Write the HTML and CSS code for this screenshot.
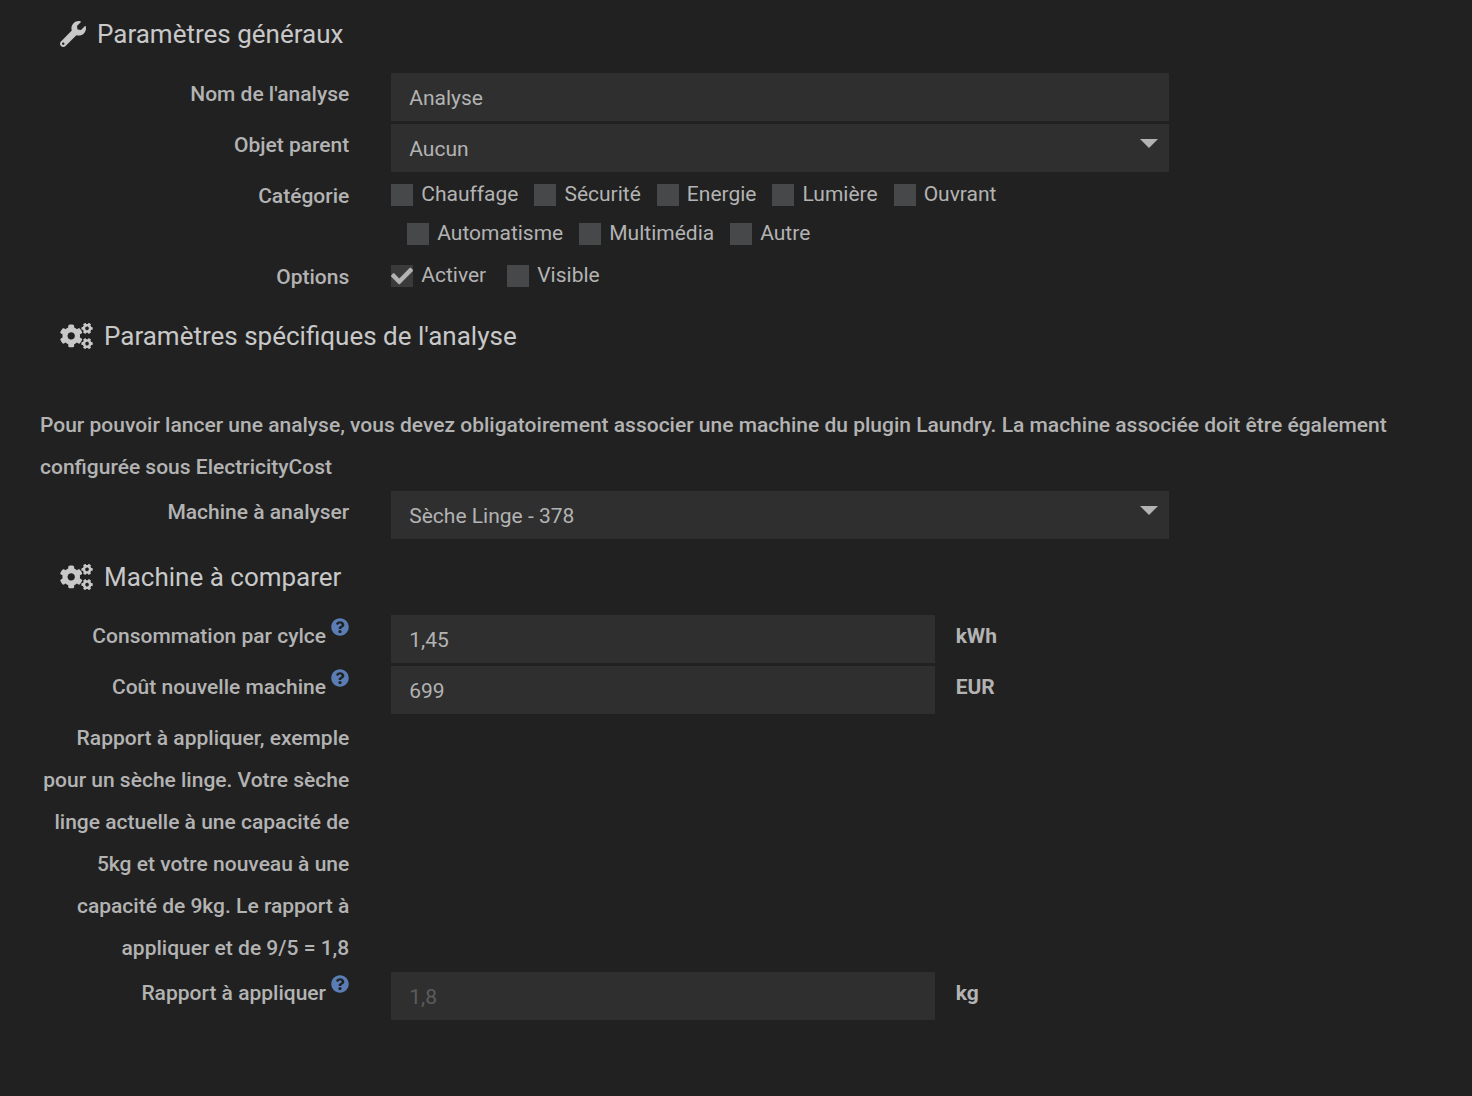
FILE: index.html
```html
<!DOCTYPE html>
<html lang="fr">
<head>
<meta charset="utf-8">
<title>Analyse</title>
<meta name="viewport" content="width=device-width, initial-scale=1">
<link rel="stylesheet" href="styles.css">
</head>
<body>
<svg class="sprite" aria-hidden="true">
  <symbol id="cogs" viewBox="0 0 640 512">
    <path id="small-cog" fill-rule="evenodd" d="M512.1 191l-8.2 14.3c-3 5.3-9.4 7.5-15.1 5.4-11.8-4.4-22.6-10.7-32.1-18.6-4.6-3.8-5.8-10.5-2.8-15.7l8.2-14.3c-6.9-8-12.3-17.3-15.9-27.4h-16.5c-6 0-11.2-4.3-12.2-10.3-2-12-2.1-24.6 0-37.1 1-6 6.2-10.4 12.2-10.4h16.5c3.6-10.1 9-19.4 15.9-27.4l-8.2-14.3c-3-5.2-1.9-11.9 2.8-15.7 9.5-7.9 20.4-14.2 32.1-18.6 5.7-2.1 12.1.1 15.1 5.4l8.2 14.3c10.5-1.9 21.2-1.9 31.7 0L552 6.3c3-5.3 9.4-7.5 15.1-5.4 11.8 4.4 22.6 10.7 32.1 18.6 4.6 3.8 5.8 10.5 2.8 15.7l-8.2 14.3c6.9 8 12.3 17.3 15.9 27.4h16.5c6 0 11.2 4.3 12.2 10.3 2 12 2.1 24.6 0 37.1-1 6-6.2 10.4-12.2 10.4h-16.5c-3.6 10.1-9 19.4-15.9 27.4l8.2 14.3c3 5.2 1.9 11.9-2.8 15.7-9.5 7.9-20.4 14.2-32.1 18.6-5.7 2.1-12.1-.1-15.1-5.4l-8.2-14.3c-10.4 1.9-21.2 1.9-31.7 0zm-10.5-58.8c38.5 29.6 82.4-14.3 52.8-52.8-38.5-29.7-82.4 14.3-52.8 52.8z"/>
    <use href="#small-cog" y="299"/>
    <path fill-rule="evenodd" d="M386.3 286.1l33.7 16.8c10.1 5.8 14.5 18.1 10.5 29.1-8.9 24.2-26.4 46.4-42.6 65.8-7.4 8.9-20.2 11.1-30.3 5.3l-29.1-16.8c-16 13.7-34.6 24.6-54.9 31.7v33.6c0 11.6-8.3 21.6-19.7 23.6-24.6 4.2-50.4 4.4-75.9 0-11.5-2-20-11.9-20-23.6V418c-20.3-7.2-38.9-18-54.9-31.7L74 403c-10 5.8-22.9 3.6-30.3-5.3-16.2-19.4-33.3-41.6-42.2-65.7-4-10.9.4-23.2 10.5-29.1l33.3-16.8c-3.9-20.9-3.9-42.4 0-63.4L12 205.8c-10.1-5.8-14.6-18.1-10.5-29 8.9-24.2 26-46.4 42.2-65.8 7.4-8.9 20.2-11.1 30.3-5.3l29.1 16.8c16-13.7 34.6-24.6 54.9-31.7V57.1c0-11.5 8.2-21.5 19.6-23.5 24.6-4.2 50.5-4.4 76-.1 11.5 2 20 11.9 20 23.6v33.6c20.3 7.2 38.9 18 54.9 31.7l29.1-16.8c10-5.8 22.9-3.6 30.3 5.3 16.2 19.4 33.2 41.6 42.1 65.8 4 10.9.1 23.2-10 29.1l-33.7 16.8c3.9 21 3.9 42.5 0 63.5zm-117.6 21.1c59.2-77-28.7-164.9-105.7-105.7-59.2 77 28.7 164.9 105.7 105.7z"/>
  </symbol>
  <symbol id="wrench" viewBox="0 0 512 512">
    <path d="M507.73 109.1c-2.24-9.03-13.54-12.09-20.12-5.51l-74.36 74.36-67.88-11.31-11.31-67.88 74.36-74.36c6.62-6.62 3.43-17.9-5.66-20.16-47.38-11.74-99.55.91-136.58 37.93-39.64 39.64-50.55 97.1-34.05 147.2L18.74 402.76c-24.99 24.99-24.99 65.51 0 90.5 24.99 24.99 65.51 24.99 90.5 0l213.21-213.21c50.12 16.71 107.47 5.68 147.37-34.22 37.07-37.07 49.7-89.32 37.91-136.73zM64 472c-13.25 0-24-10.75-24-24 0-13.26 10.75-24 24-24s24 10.74 24 24c0 13.25-10.75 24-24 24z"/>
  </symbol>
  <symbol id="question" viewBox="0 0 512 512">
    <path d="M504 256c0 136.997-111.043 248-248 248S8 392.997 8 256C8 119.083 119.043 8 256 8s248 111.083 248 248zM262.655 90c-54.497 0-89.255 22.957-116.549 63.758-3.536 5.286-2.353 12.415 2.715 16.258l34.699 26.31c5.205 3.947 12.621 3.008 16.665-2.122 17.864-22.658 30.113-35.797 57.303-35.797 20.429 0 45.698 13.148 45.698 32.958 0 14.976-12.363 22.667-32.534 33.976C247.128 238.528 216 254.941 216 296v4c0 6.627 5.373 12 12 12h56c6.627 0 12-5.373 12-12v-1.333c0-28.462 83.186-29.647 83.186-106.667 0-58.002-60.165-102-116.531-102zM256 338c-25.365 0-46 20.635-46 46 0 25.364 20.635 46 46 46s46-20.636 46-46c0-25.364-20.635-46-46-46z"/>
  </symbol>
</svg>
<form class="form">
  <section class="section">
    <h2 class="legend"><svg class="legend-icon"><use href="#wrench"/></svg>Paramètres généraux</h2>
    <div class="row">
      <label class="label" for="name">Nom de l'analyse</label>
      <div class="field"><input class="control" id="name" type="text" value="Analyse"></div>
    </div>
    <div class="row">
      <label class="label" for="parent">Objet parent</label>
      <div class="field"><select class="control" id="parent"><option>Aucun</option></select><svg class="arrow" viewBox="0 0 18 9"><path d="M0 0h18L9 9z"/></svg></div>
    </div>
    <div class="row">
      <span class="label" id="category">Catégorie</span>
      <div class="field checks" role="group" aria-labelledby="category">
        <label class="check"><input type="checkbox">Chauffage</label>
        <label class="check"><input type="checkbox">Sécurité</label>
        <label class="check"><input type="checkbox">Energie</label>
        <label class="check"><input type="checkbox">Lumière</label>
        <label class="check"><input type="checkbox">Ouvrant</label>
        <label class="check"><input type="checkbox">Automatisme</label>
        <label class="check"><input type="checkbox">Multimédia</label>
        <label class="check"><input type="checkbox">Autre</label>
      </div>
    </div>
    <div class="row">
      <span class="label" id="options">Options</span>
      <div class="field checks checks-wide" role="group" aria-labelledby="options">
        <label class="check"><input type="checkbox" checked><svg class="tick" viewBox="0 0 512 512"><path d="M173.898 439.404l-166.4-166.4c-9.997-9.997-9.997-26.206 0-36.204l36.203-36.204c9.997-9.998 26.207-9.998 36.204 0L192 312.69 432.095 72.596c9.997-9.997 26.207-9.997 36.204 0l36.203 36.204c9.997 9.997 9.997 26.206 0 36.204l-294.4 294.401c-9.998 9.997-26.207 9.997-36.204-.001z"/></svg>Activer</label>
        <label class="check"><input type="checkbox">Visible</label>
      </div>
    </div>
  </section>
  <section class="section">
    <h2 class="legend"><svg class="legend-icon legend-icon-wide"><use href="#cogs"/></svg>Paramètres spécifiques de l'analyse</h2>
    <p class="notice">Pour pouvoir lancer une analyse, vous devez obligatoirement associer une machine du plugin Laundry. La machine associée doit être également configurée sous ElectricityCost</p>
    <div class="row">
      <label class="label" for="machine">Machine à analyser</label>
      <div class="field"><select class="control" id="machine"><option>Sèche Linge - 378</option></select><svg class="arrow" viewBox="0 0 18 9"><path d="M0 0h18L9 9z"/></svg></div>
    </div>
  </section>
  <section class="section">
    <h2 class="legend"><svg class="legend-icon legend-icon-wide"><use href="#cogs"/></svg>Machine à comparer</h2>
    <div class="row row-unit">
      <label class="label" for="usage">Consommation par cylce <svg class="help"><use href="#question"/></svg></label>
      <div class="field"><input class="control" id="usage" type="text" value="1,45"></div>
      <span class="unit">kWh</span>
    </div>
    <div class="row row-unit">
      <label class="label" for="cost">Coût nouvelle machine <svg class="help"><use href="#question"/></svg></label>
      <div class="field"><input class="control" id="cost" type="text" value="699"></div>
      <span class="unit">EUR</span>
    </div>
    <div class="row">
      <p class="label">Rapport à appliquer, exemple pour un sèche linge. Votre sèche linge actuelle à une capacité de 5kg et votre nouveau à une capacité de 9kg. Le rapport à appliquer et de 9/5 = 1,8</p>
    </div>
    <div class="row row-unit">
      <label class="label" for="ratio">Rapport à appliquer <svg class="help"><use href="#question"/></svg></label>
      <div class="field"><input class="control" id="ratio" type="text" placeholder="1,8"></div>
      <span class="unit">kg</span>
    </div>
  </section>
</form>
</body>
</html>
```
FILE: styles.css
```css
* {
  box-sizing: border-box;
}

body {
  margin: 0;
  background: #212121;
  color: #b3b3b3;
  font: 400 21px/42px Roboto, sans-serif;
}

.sprite {
  display: block;
  width: 0;
  height: 0;
}

.form {
  margin: 0 48px 0 19px;
  padding-bottom: 75px;
}

.section {
  display: flex;
  flex-direction: column;
  gap: 3px;
}

.legend {
  display: flex;
  align-items: center;
  margin: 0;
  padding: 13px 41px 15px;
  color: #c8c8c8;
  font-size: 26px;
  font-weight: 400;
}

.section + .section .legend {
  padding: 17px 41px 14px;
}

.legend-icon {
  width: 26px;
  height: 26px;
  margin-right: 11px;
  fill: currentColor;
}

.legend-icon-wide {
  width: 33px;
}

.row {
  display: grid;
  grid-template-columns: 3fr 7fr 2fr;
}

.row-unit {
  grid-template-columns: 3fr 5fr 4fr;
}

.label {
  margin: 0;
  padding: 0 21px;
  font-weight: 500;
  text-align: right;
}

.notice {
  margin: 30px 0 0;
  padding: 0 21px;
  font-weight: 500;
}

.field {
  position: relative;
  padding: 0 21px;
}

.control {
  display: block;
  width: 100%;
  height: 48px;
  padding: 1px 18px 0;
  border: 0;
  border-radius: 0;
  outline: 0;
  appearance: none;
  background: #2f2f2f;
  color: #b3b3b3;
  font: inherit;
}

.control::placeholder {
  color: #5c5c5c;
  opacity: 1;
}

.arrow {
  position: absolute;
  top: 15px;
  right: 32px;
  width: 18px;
  height: 9px;
  fill: #b3b3b3;
  pointer-events: none;
}

.checks {
  display: flex;
  flex-wrap: wrap;
  align-content: flex-start;
  padding-right: 42px;
}

.check {
  position: relative;
  display: flex;
  align-items: center;
  gap: 8px;
  line-height: 39px;
}

.check + .check {
  margin-left: 16px;
}

.checks-wide .check + .check {
  margin-left: 21px;
}

.check input {
  width: 22px;
  height: 22px;
  margin: 0;
  appearance: none;
  background: #474849;
}

.check input:checked {
  background: #3a3a3b;
}

.tick {
  position: absolute;
  left: 0;
  width: 22px;
  height: 22px;
  fill: #b3b3b3;
  pointer-events: none;
}

.help {
  width: 18px;
  height: 18px;
  vertical-align: 7px;
  fill: #5a7db5;
}

.unit {
  font-weight: 700;
}
```
